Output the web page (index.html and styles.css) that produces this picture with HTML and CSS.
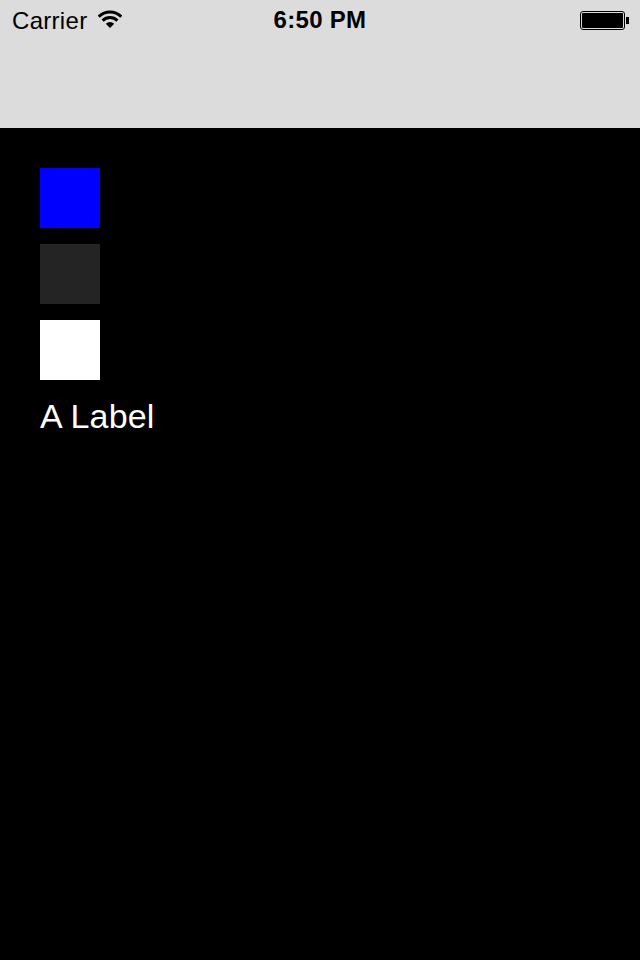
FILE: index.html
```html
<!DOCTYPE html>
<html lang="en">
<head>
<meta charset="utf-8">
<title>A Label</title>
<link rel="stylesheet" href="styles.css">
</head>
<body>
<header class="nav">
  <div class="status">
    <div class="status-left">
      <span class="carrier">Carrier</span>
      <svg class="wifi" width="24" height="19" viewBox="0 0 24 19">
        <path d="M0.7 6.7 A16 16 0 0 1 23.3 6.7" fill="none" stroke="#000" stroke-width="3"/>
        <path d="M4.6 10.6 A10.5 10.5 0 0 1 19.4 10.6" fill="none" stroke="#000" stroke-width="3"/>
        <path d="M12 18 L7.8 13.8 A6 6 0 0 1 16.2 13.8 Z" fill="#000"/>
      </svg>
    </div>
    <span class="time">6:50 PM</span>
    <div class="battery">
      <div class="battery-body"><div class="battery-fill"></div></div>
      <div class="battery-tip"></div>
    </div>
  </div>
</header>
<main class="content">
  <div class="swatch swatch-blue"></div>
  <div class="swatch swatch-dark"></div>
  <div class="swatch swatch-white"></div>
  <div class="label">A Label</div>
</main>
</body>
</html>
```
FILE: styles.css
```css
html, body {
  margin: 0;
  padding: 0;
  height: 100%;
  background: #000;
  overflow: hidden;
  font-family: "Liberation Sans", Arial, sans-serif;
}
.nav {
  height: 128px;
  background: #dcdcdc;
  box-sizing: border-box;
}
.status {
  height: 40px;
  position: relative;
  display: flex;
  align-items: center;
  justify-content: space-between;
  padding: 0 11px 0 12px;
  color: #000;
}
.status-left {
  display: flex;
  align-items: center;
  gap: 11px;
}
.carrier {
  font-size: 24px;
  line-height: 40px;
  margin-top: 2px;
  letter-spacing: 0.3px;
}
.wifi {
  display: block;
  margin-top: -1px;
}
.time {
  position: absolute;
  left: 0;
  right: 0;
  text-align: center;
  font-size: 24px;
  font-weight: 700;
  line-height: 40px;
  letter-spacing: 0.3px;
}
.battery {
  display: flex;
  align-items: center;
  margin-top: 1px;
}
.battery-body {
  width: 45px;
  height: 19px;
  box-sizing: border-box;
  border: 1px solid #000;
  border-radius: 3px;
  padding: 1px;
}
.battery-fill {
  height: 100%;
  background: #000;
  border-radius: 1px;
}
.battery-tip {
  width: 3px;
  height: 7px;
  background: #000;
  margin-left: 1px;
}
.content {
  padding: 40px 40px 0;
  display: flex;
  flex-direction: column;
  gap: 16px;
}
.swatch {
  width: 60px;
  height: 60px;
}
.swatch-blue { background: #0000ff; }
.swatch-dark { background: #242424; }
.swatch-white { background: #fff; }
.label {
  color: #fff;
  font-size: 34px;
  line-height: 40px;
  letter-spacing: 0.15px;
}
```
